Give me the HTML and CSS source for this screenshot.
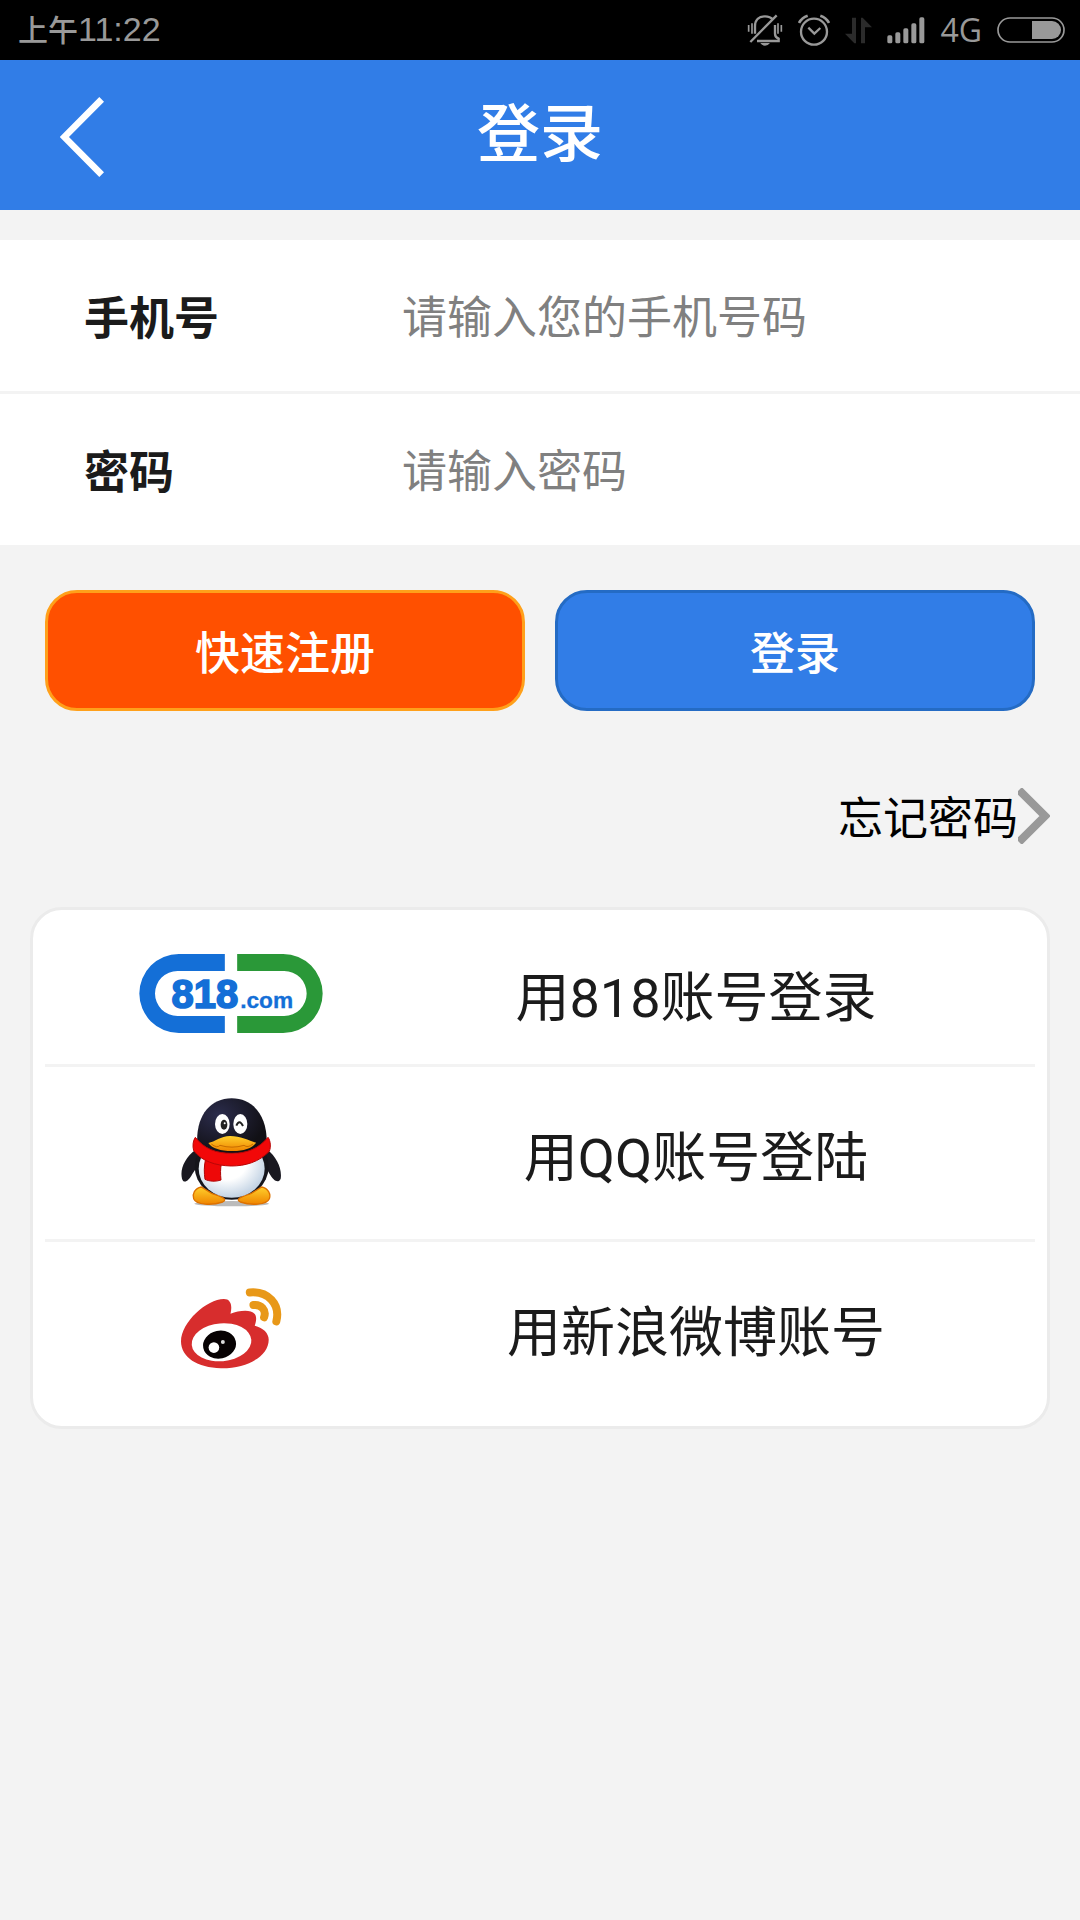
FILE: index.html
```html
<!DOCTYPE html>
<html lang="zh-CN">
<head>
    <meta charset="UTF-8">
    <meta name="viewport" content="width=device-width, initial-scale=1.0">
    <title>登录</title>
    <link rel="stylesheet" href="styles.css">
</head>
<body>
    <div class="status-bar">
        <div class="status-time"><span class="status-period">上午</span>11:22</div>
        <div class="status-icons">
            <!-- muted bell -->
            <svg width="36" height="32" viewBox="78 39 108 96" fill="none" stroke="#999" stroke-width="7">
                <path d="M102 98 V76 C102 56 114 46 132 46 C143 46 151 50 156 56 M162 72 V98 C162 106 168 111 173 113 V120 H108"/>
                <path d="M88 123 L167 43"/>
                <path d="M83 72 V92 M93 67 V98 M171 67 V98 M181 72 V92" stroke-width="5"/>
                <path d="M118 126 H147 Q141 134 132 134 Q123 134 118 126 Z" fill="#999" stroke="none"/>
            </svg>
            <!-- alarm clock -->
            <svg width="32" height="32" viewBox="234 39 96 96" fill="none" stroke="#999" stroke-width="7">
                <circle cx="282" cy="92" r="39"/>
                <path d="M265 80 L283 98 L301 81"/>
                <path d="M237 66 Q245 50 263 44 M327 66 Q319 50 301 44" stroke-width="8"/>
            </svg>
            <!-- data transfer -->
            <svg width="27" height="27" viewBox="375 50 81 81" fill="#2b2b2b">
                <path d="M396 52 H408 V129 H403 L375 100 H396 Z M423 52 H428 L456 81 H435 V129 H423 Z"/>
            </svg>
            <!-- signal -->
            <svg width="38" height="27" viewBox="500 50 114 81" fill="#999">
                <rect x="501" y="105" width="15" height="24" rx="5"/>
                <rect x="525" y="96" width="15" height="33" rx="5"/>
                <rect x="549" y="84" width="15" height="45" rx="5"/>
                <rect x="573" y="69" width="15" height="60" rx="5"/>
                <rect x="597" y="51" width="15" height="78" rx="5"/>
            </svg>
            <span class="network">4G</span>
            <!-- battery -->
            <svg width="68" height="26" viewBox="831 51 204 78">
                <rect x="834" y="54" width="198" height="72" rx="36" fill="none" stroke="#999" stroke-width="5"/>
                <path d="M936 63 H996 A27 27 0 0 1 996 117 H936 Z" fill="#999"/>
            </svg>
        </div>
    </div>

    <header class="header">
        <button class="back-button" type="button" aria-label="返回">
            <svg width="44" height="80" viewBox="180 291 132 240" fill="none" stroke="#fff" stroke-width="20">
                <path d="M305 298 L193 411 L305 524"/>
            </svg>
        </button>
        <h1>登录</h1>
    </header>

    <main>
        <form>
            <div class="fields">
                <div class="field">
                    <label for="phone">手机号</label>
                    <input type="tel" id="phone" placeholder="请输入您的手机号码">
                </div>
                <div class="field">
                    <label for="password">密码</label>
                    <input type="password" id="password" placeholder="请输入密码">
                </div>
            </div>
            <div class="actions">
                <button class="register-button" type="button">快速注册</button>
                <button class="login-button" type="submit">登录</button>
            </div>
        </form>

        <div class="forgot">
            <a href="#">忘记密码
                <svg width="32" height="56" viewBox="0 0 32 56" fill="none" stroke="#999" stroke-width="8">
                    <path d="M1 2 L27 28 L1 54"/>
                </svg>
            </a>
        </div>

        <nav class="accounts">
            <a href="#" class="account account-818">
                <span class="account-icon">
                    <svg width="184" height="79" viewBox="57 66 551 237">
                        <path d="M314 66 H176 A118 118 0 0 0 176 303 H314 V252 H172 A67 67 0 0 1 172 117 H314 Z" fill="#146fd7"/>
                        <path d="M351 66 H489 A118 118 0 0 1 489 303 H351 V252 H492 A67 67 0 0 0 492 117 H351 Z" fill="#2a9838"/>
                        <text class="logo-number" x="154" y="227">818</text>
                        <text class="logo-domain" x="360" y="227">.com</text>
                    </svg>
                </span>
                <span class="account-name">用818账号登录</span>
            </a>
            <a href="#" class="account account-qq">
                <span class="account-icon">
                    <svg width="100" height="110" viewBox="60 50 300 330">
                        <defs>
                            <radialGradient id="head" cx="30%" cy="30%" r="70%">
                                <stop offset="0" stop-color="#2b2c4c"/>
                                <stop offset="1" stop-color="#111015"/>
                            </radialGradient>
                            <radialGradient id="belly" cx="42%" cy="38%" r="62%">
                                <stop offset="0.5" stop-color="#fff"/>
                                <stop offset="1" stop-color="#c3d3e4"/>
                            </radialGradient>
                            <linearGradient id="beak" x1="0" y1="0" x2="0" y2="1">
                                <stop offset="0" stop-color="#ffd02c"/>
                                <stop offset="1" stop-color="#ef8500"/>
                            </linearGradient>
                        </defs>
                        <ellipse cx="212" cy="367" rx="112" ry="8" fill="#bbb"/>
                        <path d="M104 205 C72 228 56 263 63 292 C68 308 82 301 94 278 L126 230 Z" fill="#191820"/>
                        <path d="M319 205 C347 226 364 263 359 292 C352 307 338 299 326 278 L298 230 Z" fill="#191820"/>
                        <ellipse cx="212" cy="256" rx="111" ry="99" fill="#15151b"/>
                        <path d="M121 317 C101 321 93 339 98 352 C106 371 153 373 185 362 C203 352 177 346 152 336 Z" fill="url(#beak)" stroke="#dd7100" stroke-width="4"/>
                        <path d="M302 317 C322 321 330 339 325 352 C317 371 270 373 238 362 C220 352 246 346 271 336 Z" fill="url(#beak)" stroke="#dd7100" stroke-width="4"/>
                        <ellipse cx="212" cy="262" rx="99" ry="87" fill="url(#belly)"/>
                        <path d="M109 191 C103 106 146 51 212 51 C279 51 321 107 317 191 C287 224 139 225 109 191 Z" fill="url(#head)"/>
                        <path d="M133 237 L181 247 C178 263 178 278 180 296 C165 301 146 301 132 294 C129 274 129 256 133 237 Z" fill="#ee0808" stroke="#ae0505" stroke-width="3"/>
                        <path d="M103 168 C130 202 163 216 213 216 C260 216 293 201 321 168 C329 179 330 197 325 210 C294 242 253 254 211 254 C162 253 122 239 98 208 C94 193 96 178 103 168 Z" fill="#f20808" stroke="#b80606" stroke-width="3"/>
                        <ellipse cx="184" cy="128" rx="22" ry="30" fill="#fff"/>
                        <ellipse cx="238" cy="128" rx="21" ry="30" fill="#fff"/>
                        <ellipse cx="189" cy="130" rx="10" ry="15" fill="#222"/>
                        <circle cx="191" cy="126" r="3" fill="#fff"/>
                        <path d="M226 133 Q235 112 246 134" fill="none" stroke="#222" stroke-width="6"/>
                        <path d="M142 185 C162 181 179 165 207 164 C238 164 263 177 285 184 C273 202 243 210 212 209 C179 209 154 202 142 185 Z" fill="url(#beak)"/>
                        <path d="M151 188 Q168 202 177 192 Q213 203 249 192 Q260 201 276 188" fill="none" stroke="#c86c00" stroke-width="3"/>
                    </svg>
                </span>
                <span class="account-name">用QQ账号登陆</span>
            </a>
            <a href="#" class="account account-weibo">
                <span class="account-icon">
                    <svg width="101" height="82" viewBox="54 50 304 246">
                        <path d="M54 214 C55 154 132 87 183 86 C204 86 209 105 203 130 C228 121 263 116 276 131 C283 141 280 154 276 166 C302 172 318 189 318 208 C318 256 256 295 174 294 C104 294 54 261 54 214 Z" fill="#d72d2d"/>
                        <ellipse cx="176" cy="216" rx="90" ry="57" transform="rotate(-5 176 216)" fill="#fff"/>
                        <ellipse cx="170" cy="223" rx="50" ry="42" transform="rotate(-12 170 223)" fill="#070203"/>
                        <circle cx="153" cy="232" r="16" fill="#fff"/>
                        <circle cx="180" cy="215" r="6" fill="#ddd"/>
                        <path d="M261 66 C315 61 354 101 341 153 M272 104 C295 101 312 119 304 141" fill="none" stroke="#e89818" stroke-width="24" stroke-linecap="round"/>
                    </svg>
                </span>
                <span class="account-name">用新浪微博账号</span>
            </a>
        </nav>
    </main>
</body>
</html>
```
FILE: styles.css
```css
* {
    box-sizing: border-box;
}
body {
    font-family: Roboto, 'Noto Sans CJK SC', sans-serif;
    background-color: #f3f3f3;
    margin: 0;
    min-height: 100vh;
    font-size: 45px;
    color: #1b1b1b;
}
svg {
    display: block;
    flex-shrink: 0;
}
a {
    color: inherit;
    text-decoration: none;
}

/* Status bar */
.status-bar {
    display: flex;
    align-items: center;
    justify-content: space-between;
    height: 60px;
    padding: 0 15px 0 18px;
    background-color: #000;
    color: #999;
}
.status-time {
    font-family: 'Liberation Sans', 'Noto Sans CJK SC', sans-serif;
    font-size: 34px;
    line-height: 60px;
}
.status-period {
    font-size: 30px;
    font-weight: 500;
}
.status-icons {
    display: flex;
    align-items: center;
    gap: 15px;
}
.network {
    font-family: 'Open Sans', sans-serif;
    font-size: 32px;
    line-height: 60px;
}

/* Header */
.header {
    display: grid;
    grid-template-columns: 164px 1fr 164px;
    align-items: center;
    height: 150px;
    background-color: #317de7;
    color: #fff;
}
.back-button {
    height: 150px;
    padding: 4px 0 0 60px;
    border: none;
    background: none;
    cursor: pointer;
}
h1 {
    margin: 0;
    font-size: 63px;
    font-weight: 500;
    line-height: 150px;
    text-align: center;
}

/* Login form */
.fields {
    margin-top: 30px;
    background-color: #fff;
}
.field {
    display: flex;
    align-items: center;
    padding: 0 84px;
}
.field + .field {
    border-top: 3px solid #f3f3f3;
}
.field label {
    flex: 0 0 318px;
    font-weight: bold;
}
.field input {
    flex: 1;
    min-width: 0;
    height: 151px;
    padding: 6px 0 0;
    border: none;
    outline: none;
    background: none;
    font: inherit;
    color: inherit;
}
.field input::placeholder {
    color: #808080;
    opacity: 1;
}
.actions {
    display: flex;
    gap: 30px;
    padding: 45px 45px 0;
}
.actions button {
    flex: 1;
    height: 121px;
    padding: 0;
    border: 3px solid;
    border-radius: 32px;
    font: inherit;
    font-weight: 500;
    color: #fff;
    cursor: pointer;
}
.actions .register-button {
    background-color: #ff5000;
    border-color: #ffa01a;
}
.actions .login-button {
    background-color: #317de7;
    border-color: #246bc4;
}
.forgot {
    display: flex;
    justify-content: flex-end;
    margin: 72px 30px 59px;
    color: #000;
}
.forgot a {
    display: flex;
    align-items: center;
}

/* Third-party accounts */
.accounts {
    margin: 0 30px;
    padding: 12px;
    background-color: #fff;
    border: 3px solid #ebebeb;
    border-radius: 32px;
}
.account {
    display: grid;
    grid-template-columns: 40% 1fr;
    align-items: center;
    height: 172px;
    padding-right: 60px;
    font-size: 54px;
}
.account-818 {
    height: 142px;
}
.account + .account {
    box-sizing: content-box;
    border-top: 3px solid #f3f3f3;
}
.account-icon {
    display: flex;
    justify-content: center;
}
.account-name {
    text-align: center;
}
.logo-number, .logo-domain {
    font-family: 'Liberation Sans', sans-serif;
    font-weight: bold;
    fill: #146fd7;
    stroke: #146fd7;
}
.logo-number {
    font-size: 120px;
    stroke-width: 5px;
}
.logo-domain {
    font-size: 68px;
    stroke-width: 1px;
}
```
